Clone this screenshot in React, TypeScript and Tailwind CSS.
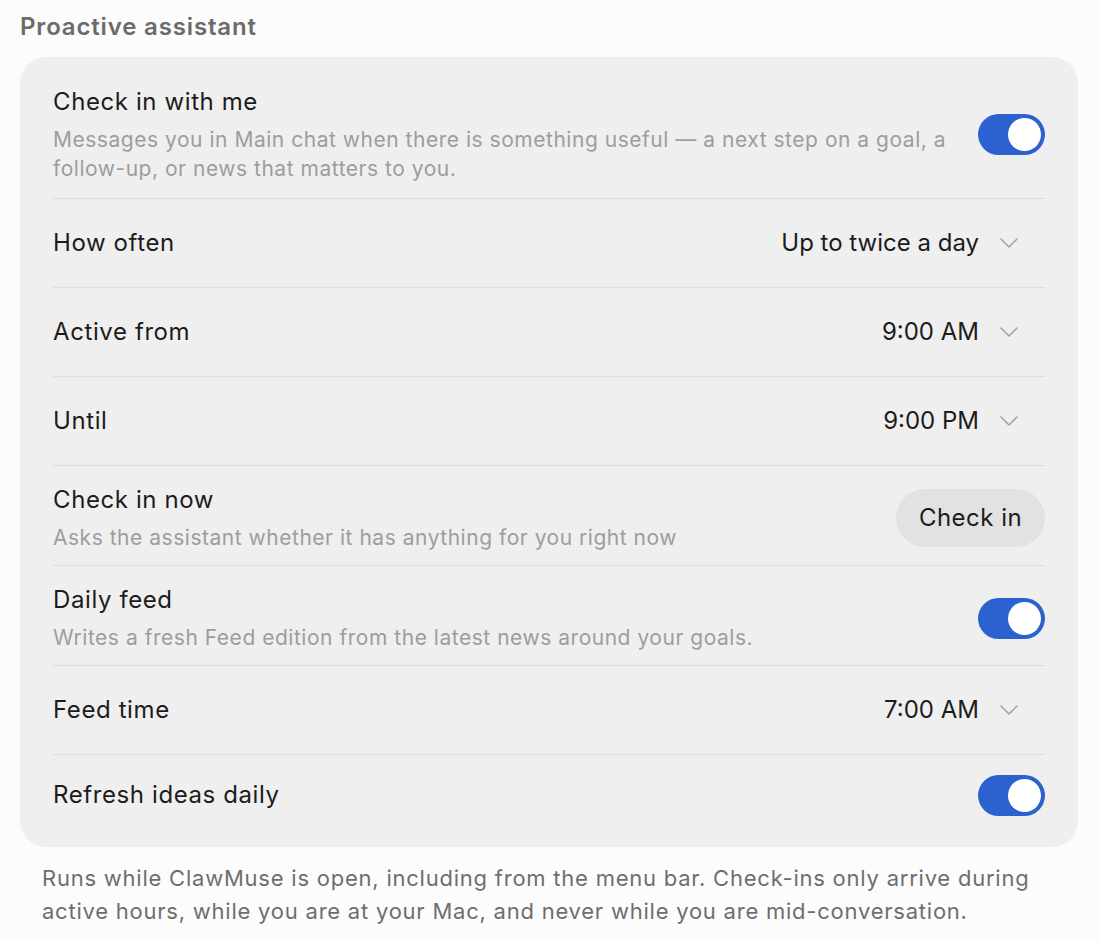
import { useState } from 'react';

type SelectRowProps = {
  label: string;
  value: string;
};

function Chevron() {
  return (
    <svg width="18" height="10" viewBox="0 0 18 10" fill="none" className="shrink-0">
      <path d="M1 1l8 8 8-8" stroke="#a3a3a3" strokeWidth="1.6" strokeLinecap="round" strokeLinejoin="round" />
    </svg>
  );
}

function Toggle({ on, onChange }: { on: boolean; onChange: (v: boolean) => void }) {
  return (
    <button
      onClick={() => onChange(!on)}
      className={`relative h-[41px] w-[67px] shrink-0 rounded-full transition-colors ${on ? 'bg-[#2b62cf]' : 'bg-[#d4d4d4]'}`}
    >
      <span
        className={`absolute top-[4px] h-[33px] w-[33px] rounded-full bg-white transition-all ${on ? 'left-[30px]' : 'left-[4px]'}`}
      />
    </button>
  );
}

function SelectRow({ label, value }: SelectRowProps) {
  return (
    <div className="flex h-[89px] items-center justify-between border-b border-[#dedede]">
      <span className="text-[24px] leading-[32px] tracking-[0.025em] text-[#1c1c1c]">{label}</span>
      <div className="flex items-center gap-[21px] pr-[27px]">
        <span className="text-[24px] leading-[32px] text-[#1c1c1c]">{value}</span>
        <Chevron />
      </div>
    </div>
  );
}

export default function App() {
  const [checkIn, setCheckIn] = useState(true);
  const [dailyFeed, setDailyFeed] = useState(true);
  const [refresh, setRefresh] = useState(true);

  return (
    <div className="min-h-screen bg-[#fcfcfc] pl-[20px] pr-[22px] pt-[10px] pb-[20px] font-['Inter','Liberation_Sans',sans-serif]">
      <h2 className="mb-[13px] text-[24px] font-semibold leading-[34px] tracking-[0.035em] text-[#6b6b6b]">
        Proactive assistant
      </h2>

      <div className="rounded-[26px] bg-[#efefef] px-[33px] pt-[10px] pb-[12px]">
        <div className="flex items-center justify-between gap-[22px] border-b border-[#dedede] pt-[19px] pb-[15px]">
          <div className="flex-1">
            <div className="text-[24px] leading-[32px] tracking-[0.025em] text-[#1c1c1c]">Check in with me</div>
            <p className="mt-[7px] text-[21px] leading-[29px] tracking-[0.025em] text-[#9d9d9d]">
              Messages you in Main chat when there is something useful — a next step on a goal, a follow-up, or news
              that matters to you.
            </p>
          </div>
          <Toggle on={checkIn} onChange={setCheckIn} />
        </div>

        <SelectRow label="How often" value="Up to twice a day" />
        <SelectRow label="Active from" value="9:00 AM" />
        <SelectRow label="Until" value="9:00 PM" />

        <div className="flex items-center justify-between border-b border-[#dedede] pt-[18px] pb-[13px]">
          <div>
            <div className="text-[24px] leading-[32px] tracking-[0.025em] text-[#1c1c1c]">Check in now</div>
            <p className="mt-[7px] text-[21px] leading-[29px] tracking-[0.025em] text-[#9d9d9d]">
              Asks the assistant whether it has anything for you right now
            </p>
          </div>
          <button className="h-[58px] w-[149px] rounded-full bg-[#e2e2e2] text-[24px] tracking-[0.02em] text-[#1c1c1c]">
            Check in
          </button>
        </div>

        <div className="flex items-center justify-between border-b border-[#dedede] pt-[18px] pb-[13px]">
          <div>
            <div className="text-[24px] leading-[32px] tracking-[0.025em] text-[#1c1c1c]">Daily feed</div>
            <p className="mt-[7px] text-[21px] leading-[29px] tracking-[0.025em] text-[#9d9d9d]">
              Writes a fresh Feed edition from the latest news around your goals.
            </p>
          </div>
          <Toggle on={dailyFeed} onChange={setDailyFeed} />
        </div>

        <SelectRow label="Feed time" value="7:00 AM" />

        <div className="flex h-[80px] items-center justify-between">
          <span className="text-[24px] leading-[32px] tracking-[0.025em] text-[#1c1c1c]">Refresh ideas daily</span>
          <Toggle on={refresh} onChange={setRefresh} />
        </div>
      </div>

      <p className="mt-[15px] pl-[22px] pr-[40px] text-[22px] leading-[33px] tracking-[0.035em] text-[#6e6e6e]">
        Runs while ClawMuse is open, including from the menu bar. Check-ins only arrive during active hours, while you
        are at your Mac, and never while you are mid-conversation.
      </p>
    </div>
  );
}
